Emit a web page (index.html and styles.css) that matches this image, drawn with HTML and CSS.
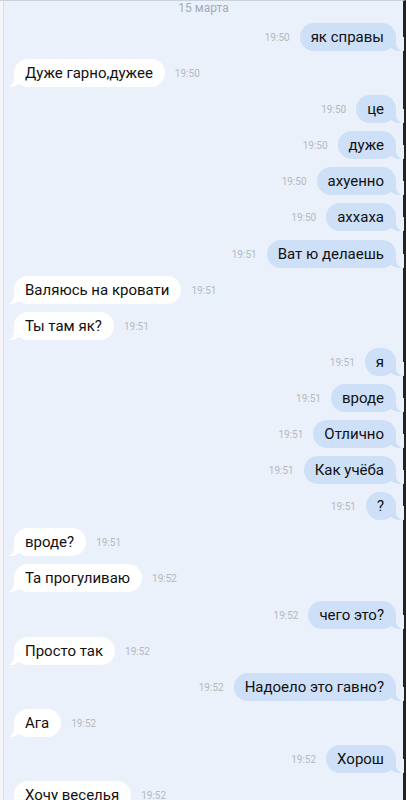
FILE: index.html
```html
<!DOCTYPE html>
<html lang="ru">
<head>
    <meta charset="UTF-8">
    <meta name="viewport" content="width=device-width, initial-scale=1.0">
    <title>Диалог</title>
    <link rel="stylesheet" href="styles.css">
</head>
<body>
    <div class="window">
        <div class="side-strip"></div>
        <div class="chat">
            <div class="date">15 марта</div>
            <div class="messages">
                <div class="msg out"><span class="time">19:50</span><div class="bubble">як справы</div></div>
                <div class="msg in"><div class="bubble">Дуже гарно,дужее</div><span class="time">19:50</span></div>
                <div class="msg out"><span class="time">19:50</span><div class="bubble">це</div></div>
                <div class="msg out"><span class="time">19:50</span><div class="bubble">дуже</div></div>
                <div class="msg out"><span class="time">19:50</span><div class="bubble">ахуенно</div></div>
                <div class="msg out"><span class="time">19:50</span><div class="bubble">аххаха</div></div>
                <div class="msg out"><span class="time">19:51</span><div class="bubble">Ват ю делаешь</div></div>
                <div class="msg in"><div class="bubble">Валяюсь на кровати</div><span class="time">19:51</span></div>
                <div class="msg in"><div class="bubble">Ты там як?</div><span class="time">19:51</span></div>
                <div class="msg out"><span class="time">19:51</span><div class="bubble">я</div></div>
                <div class="msg out"><span class="time">19:51</span><div class="bubble">вроде</div></div>
                <div class="msg out"><span class="time">19:51</span><div class="bubble">Отлично</div></div>
                <div class="msg out"><span class="time">19:51</span><div class="bubble">Как учёба</div></div>
                <div class="msg out"><span class="time">19:51</span><div class="bubble">?</div></div>
                <div class="msg in"><div class="bubble">вроде?</div><span class="time">19:51</span></div>
                <div class="msg in"><div class="bubble">Та прогуливаю</div><span class="time">19:52</span></div>
                <div class="msg out"><span class="time">19:52</span><div class="bubble">чего это?</div></div>
                <div class="msg in"><div class="bubble">Просто так</div><span class="time">19:52</span></div>
                <div class="msg out"><span class="time">19:52</span><div class="bubble">Надоело это гавно?</div></div>
                <div class="msg in"><div class="bubble">Ага</div><span class="time">19:52</span></div>
                <div class="msg out"><span class="time">19:52</span><div class="bubble">Хорош</div></div>
                <div class="msg in"><div class="bubble">Хочу веселья</div><span class="time">19:52</span></div>
            </div>
        </div>
    </div>
</body>
</html>
```

FILE: styles.css
```css
/* Reset */
* {
    margin: 0;
    padding: 0;
    box-sizing: border-box;
}

body {
    width: 406px;
    height: 800px;
    overflow: hidden;
    background-color: #ebf1fa;
    font-family: Roboto, "Liberation Sans", sans-serif;
    color: #111;
}

.window {
    display: flex;
    height: 800px;
    border-top: 1px solid #c8d2de;
    border-right: 3px solid #222;
}

/* thin column on the left edge */
.side-strip {
    width: 4px;
    flex-shrink: 0;
    background-color: #f3f5f8;
    border-right: 1px solid #d9dee5;
}

.chat {
    flex: 1;
    display: flex;
    flex-direction: column;
}

.date {
    text-align: center;
    font-size: 12px;
    line-height: 14px;
    color: #a4abb5;
}

.messages {
    display: flex;
    flex-direction: column;
    gap: 8.1px;
    padding: 8px 7px 0 10px;
}

.msg {
    display: flex;
    align-items: center;
    gap: 10px;
}

.msg.out {
    justify-content: flex-end;
}

.time {
    font-size: 10px;
    color: #b4b9c1;
    padding-top: 1px;
}

.bubble {
    position: relative;
    height: 28px;
    line-height: 28px;
    padding: 0 12px 0 11px;
    border-radius: 14px;
    font-size: 15px;
    white-space: nowrap;
}

.bubble::before,
.bubble::after {
    content: "";
    position: absolute;
    bottom: 0;
    height: 14px;
}

/* outgoing: blue with the tail on the right */
.out .bubble {
    background-color: #cde0f8;
}

.out .bubble::before {
    right: -5px;
    width: 14px;
    background-color: #cde0f8;
    border-bottom-left-radius: 12px 14px;
}

.out .bubble::after {
    right: -8px;
    width: 8px;
    background-color: #ebf1fa;
    border-bottom-left-radius: 8px;
}

/* incoming: white with the tail on the left */
.in .bubble {
    background-color: #fff;
}

.in .bubble::before {
    left: -5px;
    width: 14px;
    background-color: #fff;
    border-bottom-right-radius: 12px 14px;
}

.in .bubble::after {
    left: -8px;
    width: 8px;
    background-color: #ebf1fa;
    border-bottom-right-radius: 8px;
}
```
